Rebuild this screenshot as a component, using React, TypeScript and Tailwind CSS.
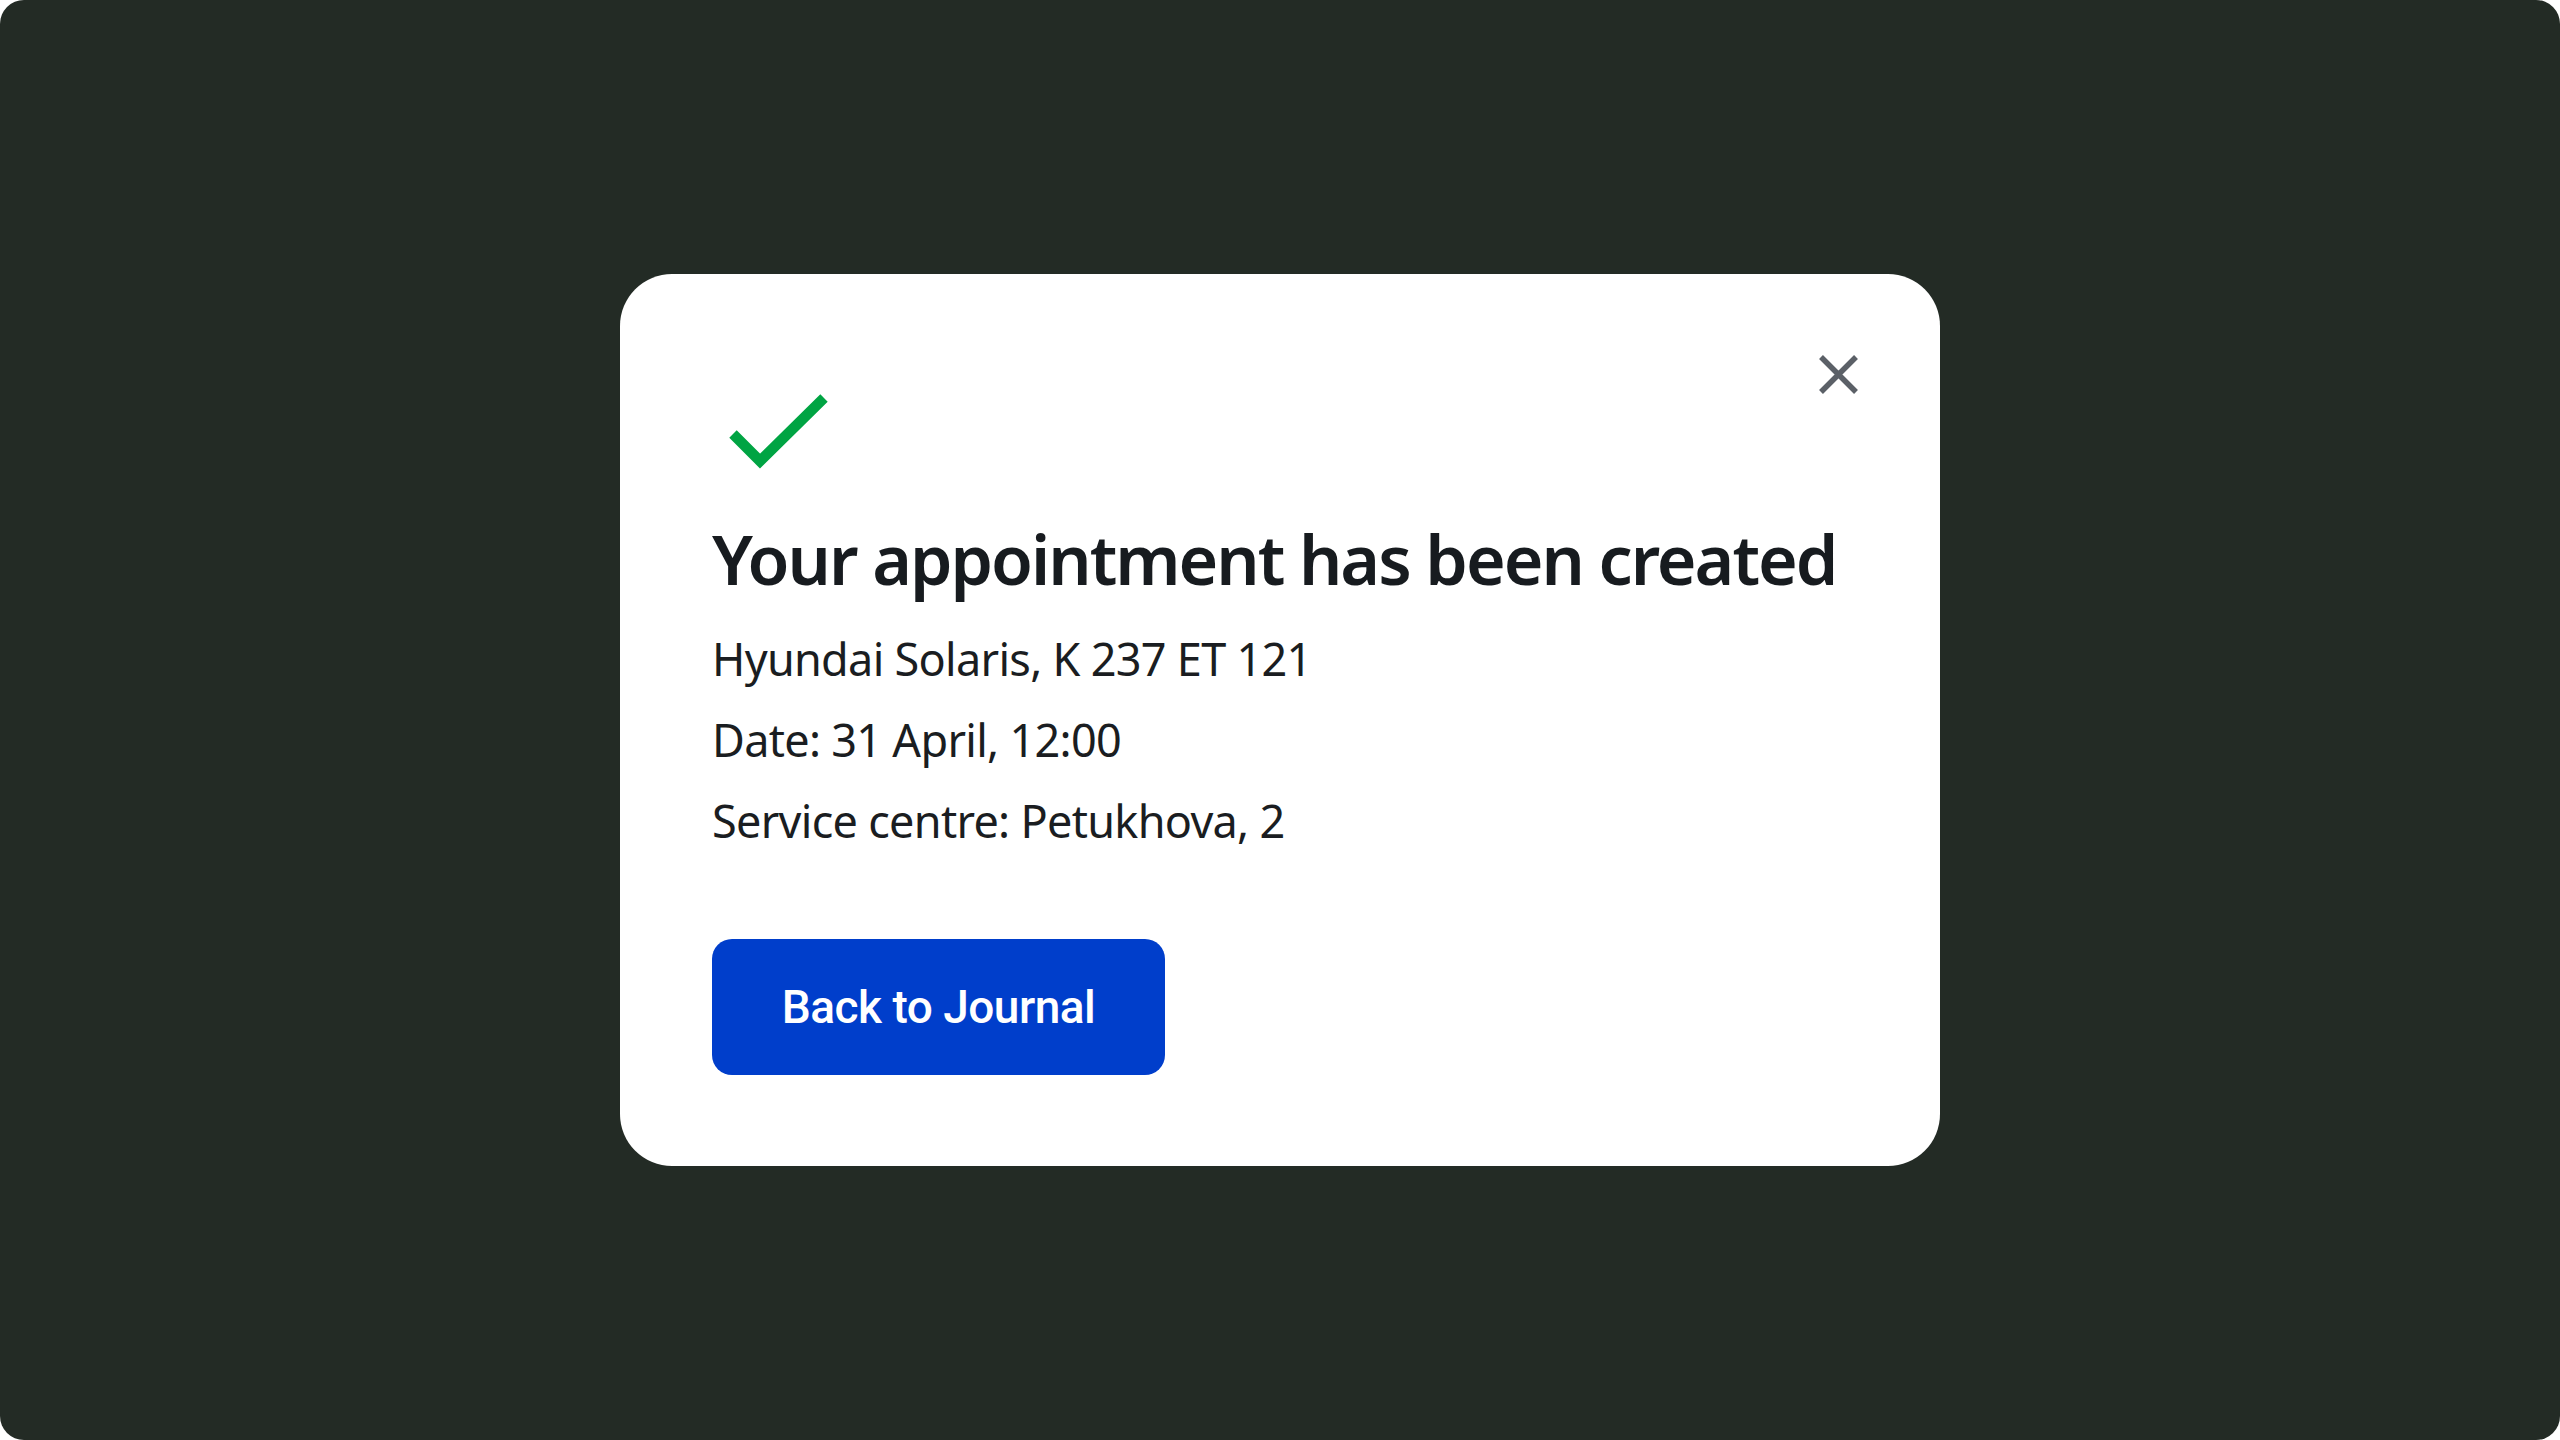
import React from "react";

function CheckMark() {
  return (
    <svg width="120" height="104" viewBox="0 0 120 104" fill="none" className="block">
      <polyline
        points="21,68 48,95 112,32"
        stroke="#00A443"
        strokeWidth="10.5"
        strokeLinecap="butt"
        strokeLinejoin="miter"
      />
    </svg>
  );
}

function CloseIcon() {
  return (
    <svg width="39" height="39" viewBox="0 0 39 39" fill="none">
      <path d="M2 2L37 37M37 2L2 37" stroke="#5B6067" strokeWidth="5.5" />
    </svg>
  );
}

export default function App() {
  const details = [
    "Hyundai Solaris, K 237 ET 121",
    "Date: 31 April, 12:00",
    "Service centre: Petukhova, 2",
  ];

  return (
    <div className="w-full h-screen bg-white">
      <div className="w-full h-full rounded-[24px] bg-[#232B25] flex items-center justify-center">
        {/* Confirmation card */}
        <div className="relative w-[1320px] bg-white rounded-[52px] pt-[92px] pb-[91px] px-[92px] flex flex-col items-start">
          <button className="absolute top-[81px] right-[82px]" aria-label="Close">
            <CloseIcon />
          </button>

          <CheckMark />

          <h1 className="mt-[47px] whitespace-nowrap text-[68px] leading-[84px] font-semibold tracking-[-2px] text-[#171B1F] [font-family:'Noto_Sans',sans-serif]">
            Your appointment has been created
          </h1>

          <div className="mt-[17px] flex flex-col">
            {details.map((line) => (
              <p
                key={line}
                className="text-[45px] leading-[81px] tracking-[-0.7px] text-[#1A1D21] [font-family:'Noto_Sans',sans-serif]"
              >
                {line}
              </p>
            ))}
          </div>

          <button className="mt-[78px] h-[136px] w-[453px] rounded-[20px] bg-[#003ECB] text-white text-[46px] font-medium tracking-[-0.5px] [font-family:Roboto,sans-serif]">
            Back to Journal
          </button>
        </div>
      </div>
    </div>
  );
}
